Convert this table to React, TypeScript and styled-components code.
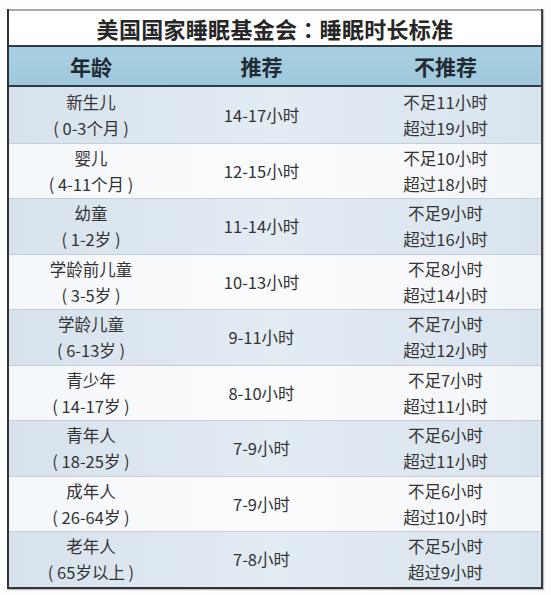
import React from "react";
import styled, { createGlobalStyle } from "styled-components";

const GlobalStyle = createGlobalStyle`
  html, body {
    margin: 0;
    padding: 0;
    background: #ffffff;
  }
  body {
    font-family: "Noto Sans CJK SC", "Noto Sans", sans-serif;
    color: #333;
  }
`;

const Page = styled.div`
  width: 551px;
  height: 595px;
  box-sizing: border-box;
  padding: 9px 8px 0 7px;
  background: #fdfdfd;
`;

const Table = styled.div`
  width: 536px;
  box-sizing: border-box;
  display: flex;
  flex-direction: column;
  border-left: 2px solid #2f3439;
  border-right: 2px solid #3a3f44;
  border-bottom: 2px solid #2f3439;
  box-shadow: 1px 1px 1px rgba(0, 0, 0, 0.25);
`;

const TitleRow = styled.div`
  height: 34px;
  border-top: 2px solid #a9a9a9;
  background: #ffffff;
  display: flex;
  align-items: center;
  justify-content: center;
  font-size: 22px;
  font-weight: 700;
  color: #262626;
  letter-spacing: 0.3px;
`;

const Colon = styled.span`
  font-family: "Noto Sans CJK TC", "Noto Sans CJK SC", sans-serif;
`;

const Grid = styled.div`
  display: grid;
  grid-template-columns: 164px 177px 1fr;
  align-items: center;
`;

const HeaderRow = styled(Grid)`
  height: 38px;
  border-top: 2px solid #2e3c47;
  border-bottom: 2px solid #2e3c47;
  background: linear-gradient(180deg, #a9d0e2 0%, #9fc8dc 100%);
  font-size: 21px;
  font-weight: 700;
  color: #1f2a33;
`;

const HeaderCell = styled.div`
  text-align: center;
`;

const Row = styled(Grid)<{ $shade: boolean; $first: boolean }>`
  height: 55.5px;
  box-sizing: border-box;
  border-top: ${(p) => (p.$first ? "none" : "1px solid #c5ced6")};
  background: ${(p) =>
    p.$shade
      ? "linear-gradient(90deg, #d7e2ec 0%, #e3ebf3 50%, #d9e4ee 100%)"
      : "linear-gradient(90deg, #f4f7fa 0%, #fbfcfd 50%, #f2f5f8 100%)"};
  font-size: 16.5px;
  color: #333;
  line-height: 26px;
`;

const Cell = styled.div`
  text-align: center;
  white-space: pre;
`;

type Item = { age: string; range: string; rec: string; min: string; max: string };

const data: Item[] = [
  { age: "新生儿", range: "( 0-3个月 )", rec: "14-17小时", min: "不足11小时", max: "超过19小时" },
  { age: "婴儿", range: "( 4-11个月 )", rec: "12-15小时", min: "不足10小时", max: "超过18小时" },
  { age: "幼童", range: "( 1-2岁 )", rec: "11-14小时", min: "不足9小时", max: "超过16小时" },
  { age: "学龄前儿童", range: "( 3-5岁 )", rec: "10-13小时", min: "不足8小时", max: "超过14小时" },
  { age: "学龄儿童", range: "( 6-13岁 )", rec: "9-11小时", min: "不足7小时", max: "超过12小时" },
  { age: "青少年", range: "( 14-17岁 )", rec: "8-10小时", min: "不足7小时", max: "超过11小时" },
  { age: "青年人", range: "( 18-25岁 )", rec: "7-9小时", min: "不足6小时", max: "超过11小时" },
  { age: "成年人", range: "( 26-64岁 )", rec: "7-9小时", min: "不足6小时", max: "超过10小时" },
  { age: "老年人", range: "( 65岁以上 )", rec: "7-8小时", min: "不足5小时", max: "超过9小时" },
];

export default function App() {
  return (
    <>
      <GlobalStyle />
      <Page>
        <Table>
          <TitleRow>
            美国国家睡眠基金会<Colon>：</Colon>睡眠时长标准
          </TitleRow>
          <HeaderRow>
            <HeaderCell>年龄</HeaderCell>
            <HeaderCell>推荐</HeaderCell>
            <HeaderCell>不推荐</HeaderCell>
          </HeaderRow>
          {data.map((d, i) => (
            <Row key={i} $shade={i % 2 === 0} $first={i === 0}>
              <Cell>
                {d.age}
                <br />
                {d.range}
              </Cell>
              <Cell>{d.rec}</Cell>
              <Cell>
                {d.min}
                <br />
                {d.max}
              </Cell>
            </Row>
          ))}
        </Table>
      </Page>
    </>
  );
}
